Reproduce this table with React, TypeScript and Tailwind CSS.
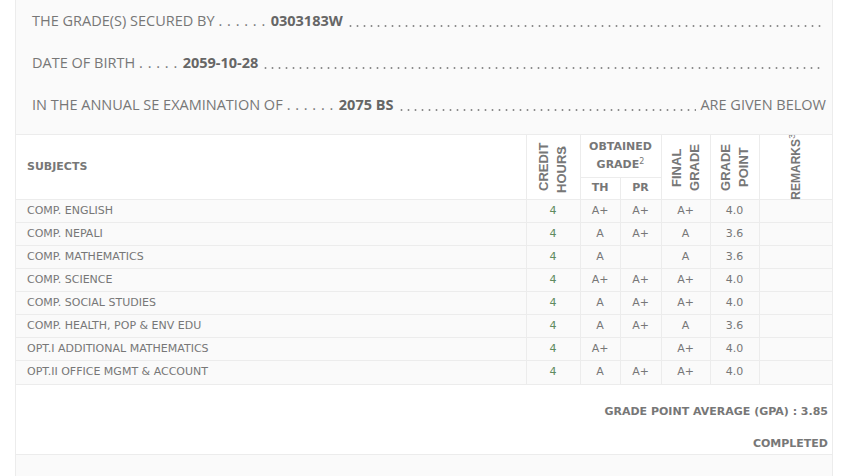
const rows = [
  { subject: 'COMP. ENGLISH', ch: '4', th: 'A+', pr: 'A+', fg: 'A+', gp: '4.0' },
  { subject: 'COMP. NEPALI', ch: '4', th: 'A', pr: 'A+', fg: 'A', gp: '3.6' },
  { subject: 'COMP. MATHEMATICS', ch: '4', th: 'A', pr: '', fg: 'A', gp: '3.6' },
  { subject: 'COMP. SCIENCE', ch: '4', th: 'A+', pr: 'A+', fg: 'A+', gp: '4.0' },
  { subject: 'COMP. SOCIAL STUDIES', ch: '4', th: 'A', pr: 'A+', fg: 'A+', gp: '4.0' },
  { subject: 'COMP. HEALTH, POP & ENV EDU', ch: '4', th: 'A', pr: 'A+', fg: 'A', gp: '3.6' },
  { subject: 'OPT.I ADDITIONAL MATHEMATICS', ch: '4', th: 'A+', pr: '', fg: 'A+', gp: '4.0' },
  { subject: 'OPT.II OFFICE MGMT & ACCOUNT', ch: '4', th: 'A', pr: 'A+', fg: 'A+', gp: '4.0' },
]

// dotted leader that fills the rest of a line
const Filler = () => (
  <span className="mx-[4px] h-[2px] min-w-0 flex-1 translate-y-[5px] bg-[radial-gradient(circle,#8c8c8c_0.9px,transparent_1.2px)] bg-[length:7px_2px] bg-repeat-x" />
)

const Dots = ({ n }: { n: number }) => (
  <span className="ml-[4px] mr-[5px] tracking-[0.5px]">{'. '.repeat(n).trim()}</span>
)

const Vertical = ({ children, size = 'text-[13px]' }: { children: React.ReactNode; size?: string }) => (
  <div className="flex h-[64px] items-center justify-center">
    <div className={`rotate-180 text-center font-['Liberation_Sans',sans-serif] ${size} font-bold leading-[18px] text-[#777] [writing-mode:vertical-rl]`}>
      {children}
    </div>
  </div>
)

const cell = 'border-l border-[#ececec] text-center'

export default function App() {
  return (
    <div className="min-h-[476px] bg-white">
      <div className="ml-[15px] w-[818px] border-x border-[#ececec] bg-[#fafafa]">
        {/* student details */}
        <div className="pb-[8px] pl-[16px] pr-[6px] font-['Open_Sans',sans-serif] text-[14.5px] text-[#777]">
          <div className="flex h-[42px] items-center whitespace-nowrap">
            <span>THE GRADE(S) SECURED BY</span>
            <Dots n={6} />
            <b className="text-[#666]">0303183W</b>
            <Filler />
          </div>
          <div className="flex h-[42px] items-center whitespace-nowrap">
            <span>DATE OF BIRTH</span>
            <Dots n={5} />
            <b className="text-[#666]">2059-10-28</b>
            <Filler />
          </div>
          <div className="flex h-[42px] items-center whitespace-nowrap">
            <span>IN THE ANNUAL SE EXAMINATION OF</span>
            <Dots n={6} />
            <b className="text-[#666]">2075 BS</b>
            <Filler />
            <span>ARE GIVEN BELOW</span>
          </div>
        </div>

        {/* grades table */}
        <table className="w-full table-fixed border-collapse font-['DejaVu_Sans',sans-serif] text-[11px] text-[#777]">
          <colgroup>
            <col className="w-[510px]" />
            <col className="w-[54px]" />
            <col className="w-[40px]" />
            <col className="w-[41px]" />
            <col className="w-[49px]" />
            <col className="w-[49px]" />
            <col className="w-[73px]" />
          </colgroup>
          <thead className="bg-white">
            <tr className="h-[43px] border-t border-[#ececec]">
              <th rowSpan={2} className="pl-[11px] text-left font-bold">
                SUBJECTS
              </th>
              <th rowSpan={2} className={cell}>
                <Vertical>
                  CREDIT
                  <br />
                  HOURS<sup className="text-[9px] font-normal">1</sup>
                </Vertical>
              </th>
              <th colSpan={2} className={`${cell} leading-[18px] font-bold`}>
                OBTAINED
                <br />
                GRADE<sup className="text-[8px] font-normal">2</sup>
              </th>
              <th rowSpan={2} className={cell}>
                <Vertical>
                  FINAL
                  <br />
                  GRADE
                </Vertical>
              </th>
              <th rowSpan={2} className={cell}>
                <Vertical>
                  GRADE
                  <br />
                  POINT
                </Vertical>
              </th>
              <th rowSpan={2} className={`${cell} overflow-hidden`}>
                <Vertical size="text-[12px]">
                  REMARKS<span className="relative left-[4px] text-[9px] font-normal">3</span>
                </Vertical>
              </th>
            </tr>
            <tr className="h-[22px]">
              <th className={`${cell} border-t font-bold`}>TH</th>
              <th className={`${cell} border-t font-bold`}>PR</th>
            </tr>
          </thead>
          <tbody>
            {rows.map((r) => (
              <tr key={r.subject} className="h-[23px] border-t border-[#ececec]">
                <td className="pl-[11px]">{r.subject}</td>
                <td className={`${cell} text-[#5f8a5f]`}>{r.ch}</td>
                <td className={cell}>{r.th}</td>
                <td className={cell}>{r.pr}</td>
                <td className={cell}>{r.fg}</td>
                <td className={cell}>{r.gp}</td>
                <td className={cell}></td>
              </tr>
            ))}
          </tbody>
        </table>

        {/* summary */}
        <div className="flex h-[71px] flex-col items-end border-y border-[#ececec] bg-white pr-[4px] font-['DejaVu_Sans',sans-serif] text-[11px] font-bold text-[#777]">
          <div className="mt-[19px]">GRADE POINT AVERAGE (GPA) : 3.85</div>
          <div className="mt-[16px]">COMPLETED</div>
        </div>
        <div className="h-[22px]" />
      </div>
    </div>
  )
}
